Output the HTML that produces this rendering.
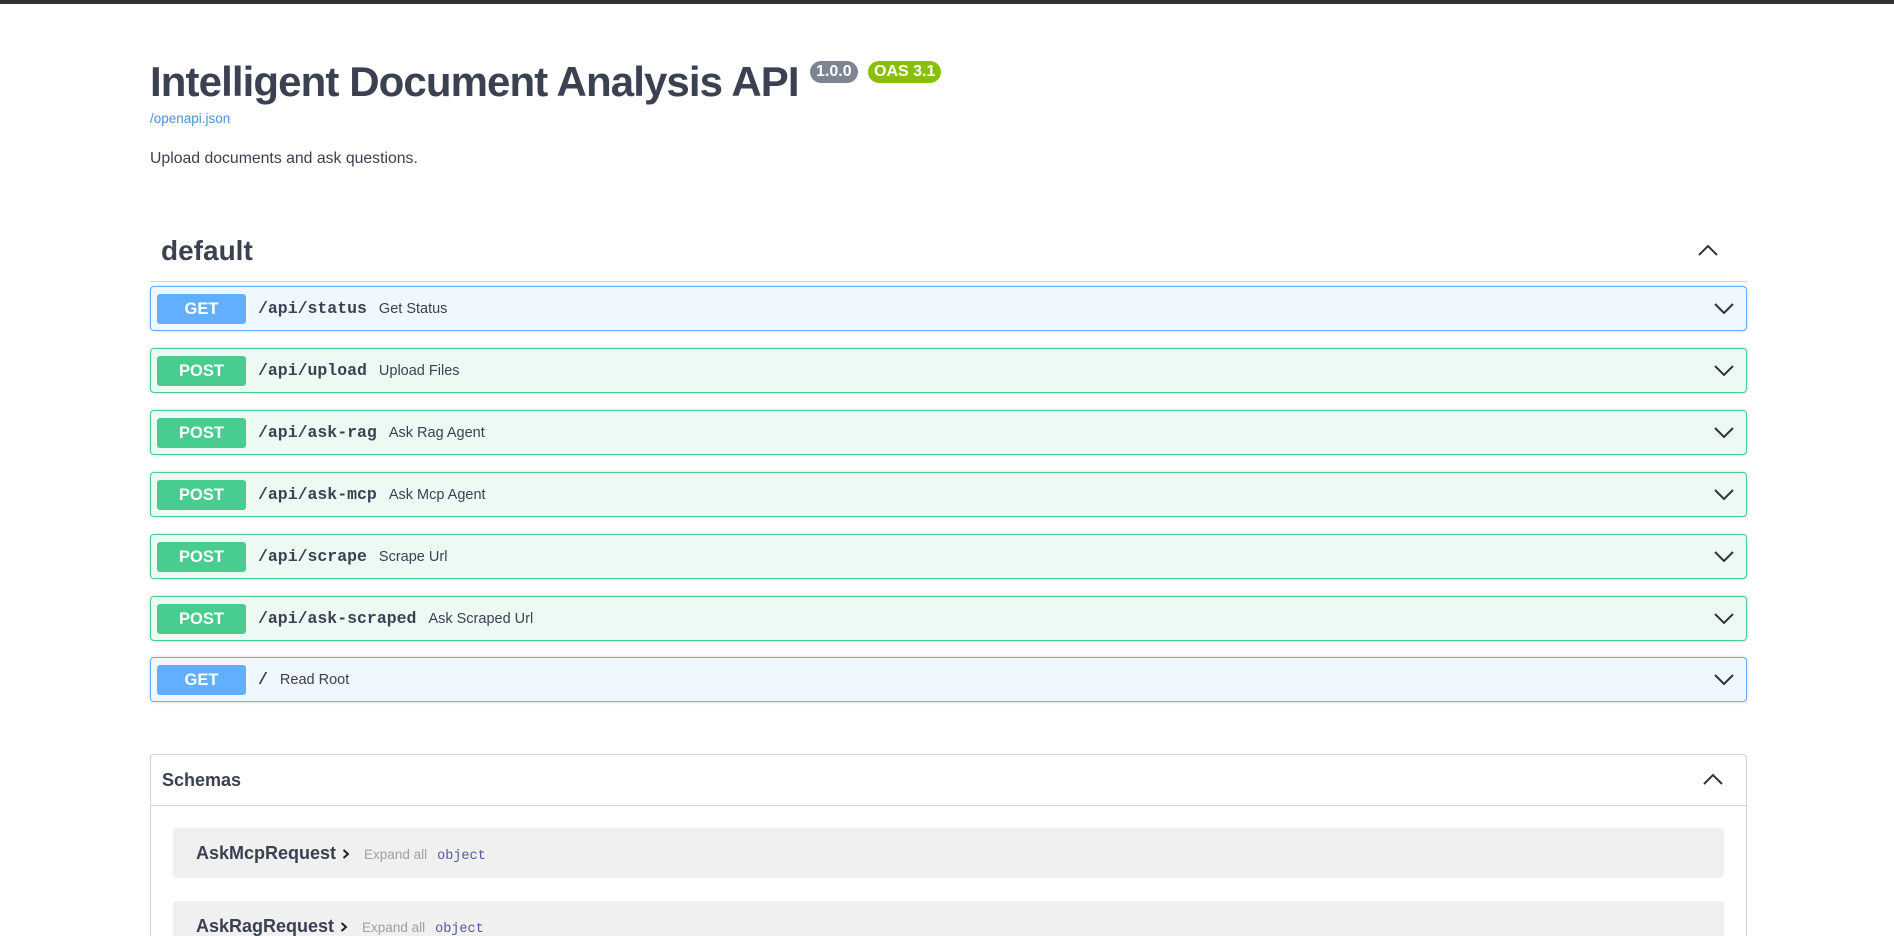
<!DOCTYPE html>
<html style="width:1894px;height:936px;overflow:hidden"><head><meta charset="utf-8"><style>
*{box-sizing:border-box;margin:0;padding:0}
body{width:1894px;height:936px;overflow:hidden;background:#fff;font-family:"Liberation Sans",Arial,sans-serif;color:#3b4151;position:relative}
.topbar{position:absolute;left:0;top:0;width:1894px;height:4px;background:#333}
.abs{position:absolute}
h1{position:absolute;left:150px;top:58px;font-size:42px;font-weight:bold;color:#3b4151;white-space:nowrap;letter-spacing:-0.9px}
.badge{position:absolute;top:61px;height:22px;border-radius:11px;color:#fff;font-weight:bold;font-size:16px;line-height:22px;padding:0 6px}
.link{left:150px;top:111px;font-size:13.5px;color:#4990e2}
.desc{left:150px;top:150px;font-size:15.8px}
.def{left:161px;top:235px;font-size:28px;font-weight:bold}
.line{left:150px;top:281px;width:1597px;height:1px;background:#d0d2d6}
.op{position:absolute;left:150px;width:1597px;height:45px;border:1px solid;border-radius:4px;box-shadow:0 0 3px rgba(0,0,0,.19)}
.get{background:#eff7ff;border-color:#61affe}
.post{background:#edfaf4;border-color:#49cc90}
.m{position:absolute;left:6px;top:7px;width:89px;height:30px;border-radius:3px;color:#fff;font-weight:bold;font-size:16.5px;line-height:30px;text-align:center}
.get .m{background:#61affe}.post .m{background:#49cc90}
.p{position:absolute;left:107px;top:0;line-height:43px;font-family:"Liberation Mono","DejaVu Sans Mono",monospace;font-weight:bold;font-size:16.5px;color:#3b4151}
.p span{font-family:"Liberation Sans",Arial,sans-serif;font-weight:normal;font-size:14.5px;margin-left:12px}
.chev{position:absolute;right:12px;top:13px}
.schemas{left:150px;top:754px;width:1597px;height:182px;border:1px solid #d0d2d6;border-bottom:none;border-radius:4px 4px 0 0;overflow:hidden}
.sh{height:51px;border-bottom:1px solid #d0d2d6;font-size:18px;font-weight:bold;line-height:50px;padding-left:11px;color:#3b4151}
.model{position:absolute;left:22px;width:1551px;height:50px;background:#f0f0f0;border-radius:4px;line-height:50px;padding-left:23px;white-space:nowrap}
.model b{font-size:18px;color:#3b4151}
.model .ea{font-size:13.5px;color:#a0a0a0;margin-left:14px}
.model .ob{font-family:"Liberation Mono",monospace;font-size:13.5px;color:#55a;margin-left:10px}
.model svg{margin-left:6px;vertical-align:-1px}
</style></head><body>
<div class="topbar"></div>
<h1>Intelligent Document Analysis API</h1>
<div class="badge" style="left:810px;background:#7d8492">1.0.0</div>
<div class="badge" style="left:868px;background:#89bf04">OAS 3.1</div>
<div class="abs link">/openapi.json</div>
<div class="abs desc">Upload documents and ask questions.</div>
<div class="abs def">default</div>
<svg class="abs" style="left:1697px;top:242px" width="22" height="16" viewBox="0 0 22 16"><path d="M2 13 L11 4 L20 13" fill="none" stroke="#333" stroke-width="2"/></svg>
<div class="abs line"></div>

<div class="op get" style="top:286px"><div class="m">GET</div><div class="p">/api/status<span>Get Status</span></div><svg class="chev" width="20" height="16" viewBox="0 0 20 16"><path d="M1 4 L10 13 L19 4" fill="none" stroke="#333" stroke-width="2"/></svg></div>
<div class="op post" style="top:348px"><div class="m">POST</div><div class="p">/api/upload<span>Upload Files</span></div><svg class="chev" width="20" height="16" viewBox="0 0 20 16"><path d="M1 4 L10 13 L19 4" fill="none" stroke="#333" stroke-width="2"/></svg></div>
<div class="op post" style="top:410px"><div class="m">POST</div><div class="p">/api/ask-rag<span>Ask Rag Agent</span></div><svg class="chev" width="20" height="16" viewBox="0 0 20 16"><path d="M1 4 L10 13 L19 4" fill="none" stroke="#333" stroke-width="2"/></svg></div>
<div class="op post" style="top:472px"><div class="m">POST</div><div class="p">/api/ask-mcp<span>Ask Mcp Agent</span></div><svg class="chev" width="20" height="16" viewBox="0 0 20 16"><path d="M1 4 L10 13 L19 4" fill="none" stroke="#333" stroke-width="2"/></svg></div>
<div class="op post" style="top:534px"><div class="m">POST</div><div class="p">/api/scrape<span>Scrape Url</span></div><svg class="chev" width="20" height="16" viewBox="0 0 20 16"><path d="M1 4 L10 13 L19 4" fill="none" stroke="#333" stroke-width="2"/></svg></div>
<div class="op post" style="top:596px"><div class="m">POST</div><div class="p">/api/ask-scraped<span>Ask Scraped Url</span></div><svg class="chev" width="20" height="16" viewBox="0 0 20 16"><path d="M1 4 L10 13 L19 4" fill="none" stroke="#333" stroke-width="2"/></svg></div>
<div class="op get" style="top:657px"><div class="m">GET</div><div class="p">/<span>Read Root</span></div><svg class="chev" width="20" height="16" viewBox="0 0 20 16"><path d="M1 4 L10 13 L19 4" fill="none" stroke="#333" stroke-width="2"/></svg></div>

<div class="abs schemas">
<div class="sh">Schemas</div>
<svg class="abs" style="right:22px;top:16px" width="22" height="16" viewBox="0 0 22 16"><path d="M2 13 L11 4 L20 13" fill="none" stroke="#333" stroke-width="2"/></svg>
<div class="model" style="top:73px"><b>AskMcpRequest</b><svg width="8" height="12" viewBox="0 0 8 12"><path d="M1.5 2 L6 6 L1.5 10" fill="none" stroke="#222" stroke-width="2"/></svg><span class="ea">Expand all</span><span class="ob">object</span></div>
<div class="model" style="top:146px"><b>AskRagRequest</b><svg width="8" height="12" viewBox="0 0 8 12"><path d="M1.5 2 L6 6 L1.5 10" fill="none" stroke="#222" stroke-width="2"/></svg><span class="ea">Expand all</span><span class="ob">object</span></div>
</div>
</body></html>
